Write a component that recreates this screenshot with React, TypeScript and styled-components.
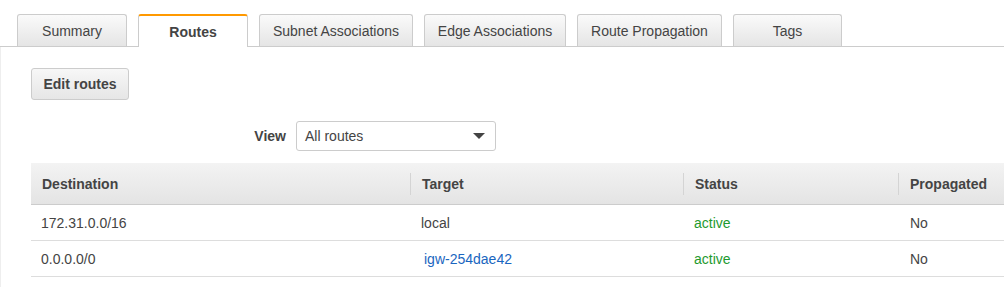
import React from 'react'
import styled, { createGlobalStyle, css } from 'styled-components'

const GlobalStyle = createGlobalStyle`
  html, body {
    margin: 0;
    padding: 0;
    background: #fff;
    overflow: hidden;
  }
  body {
    font-family: 'Liberation Sans', Arial, sans-serif;
    font-size: 14px;
    color: #444;
  }
`

const Page = styled.div`
  width: 1004px;
  height: 287px;
  overflow: hidden;
`

const TabBar = styled.div`
  display: flex;
  gap: 11px;
  padding: 14px 0 0 17px;
  border-bottom: 1px solid #ccc;
  height: 32px;
`

const Tab = styled.div<{ $active?: boolean; $width: number }>`
  box-sizing: border-box;
  width: ${(p) => p.$width}px;
  height: 32px;
  display: flex;
  align-items: center;
  justify-content: center;
  font-size: 14px;
  color: #444;
  border: 1px solid #ccc;
  border-bottom: none;
  border-radius: 3px 3px 0 0;
  background: linear-gradient(#fafafa, #e5e5e5);
  ${(p) =>
    p.$active &&
    css`
      height: 33px;
      font-weight: bold;
      background: #fff;
      border-top: 2px solid #f90;
      padding-top: 1px;
    `}
`

const Content = styled.div`
  border-left: 1px solid #eee;
  padding: 21px 0 20px 30px;
`

const Button = styled.button`
  box-sizing: border-box;
  height: 32px;
  width: 98px;
  padding: 0;
  font-family: inherit;
  font-size: 14px;
  font-weight: bold;
  color: #444;
  border: 1px solid #ccc;
  border-radius: 3px;
  background: linear-gradient(#f7f7f7, #e6e6e6);
`

const ViewRow = styled.div`
  display: flex;
  align-items: center;
  gap: 10px;
  margin-top: 21px;
`

const ViewLabel = styled.label`
  width: 255px;
  text-align: right;
  font-size: 14px;
  font-weight: bold;
  color: #444;
`

const Select = styled.div`
  box-sizing: border-box;
  width: 200px;
  height: 30px;
  display: flex;
  align-items: center;
  justify-content: space-between;
  padding: 0 10px 0 8px;
  border: 1px solid #ccc;
  border-radius: 3px;
  font-size: 14px;
  color: #444;
`

const Caret = styled.span`
  width: 0;
  height: 0;
  border-left: 6px solid transparent;
  border-right: 6px solid transparent;
  border-top: 6px solid #444;
`

const Table = styled.div`
  margin-top: 12px;
  width: 1040px;
`

const cols = '379px 273px 215px 1fr'

const HeadRow = styled.div`
  display: grid;
  grid-template-columns: ${cols};
  height: 42px;
  background: linear-gradient(#f3f3f3, #e4e4e4);
  border-bottom: 1px solid #ccc;
  box-sizing: border-box;
`

const HeadCell = styled.div<{ $first?: boolean }>`
  display: flex;
  align-items: center;
  padding: 10px 0;
  font-weight: bold;
  font-size: 14px;
  color: #444;
  & > span {
    display: flex;
    align-items: center;
    height: 22px;
    padding-left: ${(p) => (p.$first ? 10 : 11)}px;
    border-left: 1px solid ${(p) => (p.$first ? 'transparent' : '#d4d4d4')};
  }
`

const Row = styled.div`
  display: grid;
  grid-template-columns: ${cols};
  height: 36px;
  box-sizing: border-box;
  border-bottom: 1px solid #ddd;
`

const Cell = styled.div<{ $tone?: 'ok' | 'link'; $indent?: number }>`
  display: flex;
  align-items: center;
  padding-left: ${(p) => p.$indent ?? 11}px;
  font-size: 14px;
  color: ${(p) => (p.$tone === 'ok' ? '#1e9a2f' : p.$tone === 'link' ? '#1a66c0' : '#444')};
`

const tabs = [
  { label: 'Summary', width: 110 },
  { label: 'Routes', width: 110, active: true },
  { label: 'Subnet Associations', width: 154 },
  { label: 'Edge Associations', width: 142 },
  { label: 'Route Propagation', width: 145 },
  { label: 'Tags', width: 109 },
]

const routes = [
  { dest: '172.31.0.0/16', target: 'local', link: false, status: 'active', propagated: 'No' },
  { dest: '0.0.0.0/0', target: 'igw-254dae42', link: true, status: 'active', propagated: 'No' },
]

export default function App() {
  return (
    <Page>
      <GlobalStyle />
      <TabBar>
        {tabs.map((t) => (
          <Tab key={t.label} $active={t.active} $width={t.width}>
            {t.label}
          </Tab>
        ))}
      </TabBar>
      <Content>
        <Button>Edit routes</Button>
        <ViewRow>
          <ViewLabel>View</ViewLabel>
          <Select>
            <span>All routes</span>
            <Caret />
          </Select>
        </ViewRow>
        <Table>
          <HeadRow>
            <HeadCell $first>
              <span>Destination</span>
            </HeadCell>
            <HeadCell>
              <span>Target</span>
            </HeadCell>
            <HeadCell>
              <span>Status</span>
            </HeadCell>
            <HeadCell>
              <span>Propagated</span>
            </HeadCell>
          </HeadRow>
          {routes.map((r) => (
            <Row key={r.dest}>
              <Cell $indent={10}>{r.dest}</Cell>
              <Cell $tone={r.link ? 'link' : undefined} $indent={r.link ? 14 : 11}>
                {r.target}
              </Cell>
              <Cell $tone="ok">{r.status}</Cell>
              <Cell $indent={12}>{r.propagated}</Cell>
            </Row>
          ))}
        </Table>
      </Content>
    </Page>
  )
}
